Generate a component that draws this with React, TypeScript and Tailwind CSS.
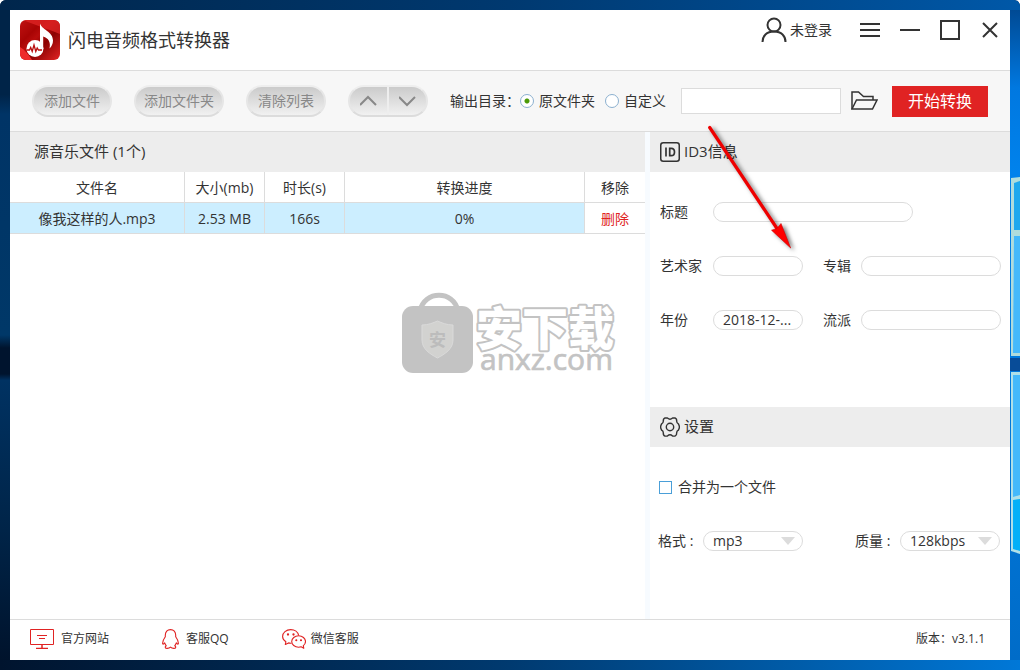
import React, { useState } from 'react';

interface AudioFile {
  id: number;
  name: string;
  size: string;
  duration: string;
  progress: number;
}

const INITIAL_FILES: AudioFile[] = [
  { id: 1, name: '像我这样的人.mp3', size: '2.53 MB', duration: '166s', progress: 0 },
];

/* ---------- Icons ---------- */

const AppLogo: React.FC = () => (
  <svg width="40" height="40" viewBox="0 0 40 40" aria-hidden="true">
    <defs>
      <linearGradient id="logoBg" x1="0" y1="0" x2="1" y2="1">
        <stop offset="0" stopColor="#c01212" />
        <stop offset="0.3" stopColor="#a80404" />
        <stop offset="0.42" stopColor="#b80c0c" />
        <stop offset="0.6" stopColor="#8c0202" />
        <stop offset="1" stopColor="#e22424" />
      </linearGradient>
    </defs>
    <rect width="40" height="40" rx="6" fill="url(#logoBg)" />
    <path d="M6 0h28a6 6 0 0 1 6 6v8C30 10 16 5 4 .5Z" fill="#e02626" opacity=".75" />
    <path d="M0 27c5 3 9 8 12 13H6a6 6 0 0 1-6-6Z" fill="#ee2c2c" />
    <circle cx="15" cy="28.500" r="8.500" fill="#fff" />
    <path d="M20 3.500c1.500 6 13 8 13 17 0 3.500-1.500 6-3.500 8 1.500-6-1-10.500-6.300-12v12.500H20Z" fill="#fff" />
    <path d="M7 30h2.500l1.200-2.500 1.500 4 1.800-6.500 1.800 6.500 1.400-3.500 1.300 2H22" fill="none" stroke="#b80c0c" strokeWidth="1.300" />
  </svg>
);

const UserIcon: React.FC = () => (
  <svg width="26" height="26" viewBox="0 0 26 26" fill="none" stroke="#333" strokeWidth="2" aria-hidden="true">
    <circle cx="13" cy="8" r="6.500" />
    <path d="M1.500 25c0-6 4-10.500 11.500-10.500S24.500 19 24.500 25" />
  </svg>
);

const FolderIcon: React.FC = () => (
  <svg width="27" height="20" viewBox="0 0 27 20" fill="none" stroke="#333" strokeWidth="1.500" aria-hidden="true">
    <path d="M1 18V1h6.500l5 4.500H22V9" />
    <path d="M1 18 5.500 9h20.500L21.500 18Z" />
  </svg>
);

const IdIcon: React.FC = () => (
  <svg width="20" height="20" viewBox="0 0 20 20" aria-hidden="true">
    <rect x=".75" y=".75" width="18.500" height="18.500" rx="2.500" fill="none" stroke="#333" strokeWidth="1.500" />
    <path d="M6 5.500v9M9.700 6.300v7.400h1.500c2.200 0 3.300-1.400 3.300-3.700s-1.100-3.700-3.300-3.700Z" fill="none" stroke="#333" strokeWidth="1.700" />
  </svg>
);

const GearIcon: React.FC = () => (
  <svg width="20" height="20" viewBox="0 0 20 20" fill="none" stroke="#333" strokeWidth="1.400" strokeLinejoin="round" aria-hidden="true">
    <circle cx="10" cy="10" r="3.700" />
    <path d="M7.400 1 5 .9C3.600 1.500 3.100 2.300 3.300 4.300 3.300 5.500 2.700 6.300 1.600 6.900L.7 9v2l.9 2.100c1.100.6 1.700 1.400 1.700 2.600-.2 2 .3 2.800 1.700 3.400l2.400-.1c1-.9 1.600-1.300 2.600-1.300s1.600.4 2.600 1.300l2.400.1c1.400-.6 1.900-1.400 1.700-3.400 0-1.200.6-2 1.700-2.600l.9-2.100V9l-.9-2.100c-1.100-.6-1.700-1.400-1.700-2.600.2-2-.3-2.800-1.700-3.400L12.600 1c-1 .9-1.600 1.300-2.600 1.300S8.400 1.900 7.400 1Z" />
  </svg>
);

const MonitorIcon: React.FC = () => (
  <svg width="24" height="20" viewBox="0 0 24 20" fill="none" stroke="#e02323" aria-hidden="true">
    <path d="M.5.5h23v15H.5ZM7 6.500h10M9 9.500h6" />
    <path d="M12 16v3M6 19.500h12" strokeWidth="1.500" />
  </svg>
);

const QQIcon: React.FC = () => (
  <svg width="17" height="20" viewBox="0 0 17 20" fill="none" stroke="#e02323" strokeWidth="1.100" strokeLinejoin="round" aria-hidden="true">
    <path d="M8.500.6C5.300.6 3.300 3 3.300 6.300v1.500C1.700 10 .6 12 .6 14.200c0 1.300.9 1.300 2.100-.3.300 1.200.9 2.100 1.600 2.900-1.500.6-1.600 2.600.9 2.600 1.500 0 2.500-.4 3.300-1.200.8.800 1.800 1.200 3.300 1.200 2.500 0 2.400-2 .9-2.600.7-.8 1.300-1.700 1.600-2.900 1.200 1.600 2.100 1.600 2.100.3 0-2.200-1.100-4.200-2.700-6.400V6.300C13.700 3 11.700.6 8.500.6Z" />
  </svg>
);

const WeChatIcon: React.FC = () => (
  <svg width="24" height="20" viewBox="0 0 24 20" fill="none" stroke="#e02323" strokeWidth="1.100" strokeLinejoin="round" aria-hidden="true">
    <path d="M9.500 14.200c-1.100.1-2 0-3-.3L3.300 15.500l.6-2.800C1.700 11.400.6 9.500.6 7.400.6 3.600 4.200.6 8.700.6c4 0 7.300 2.500 8 5.900" />
    <path d="M16.600 6.800c-3.800 0-6.900 2.500-6.900 5.700s3.100 5.700 6.900 5.700c.9 0 1.700-.1 2.500-.4l2.700 1.500-.5-2.700c1.400-1 2.200-2.500 2.200-4.100 0-3.200-3.100-5.700-6.900-5.700Z" />
    <circle cx="6" cy="5.500" r=".6" fill="#e02323" />
    <circle cx="11.500" cy="5.500" r=".6" fill="#e02323" />
    <circle cx="14.300" cy="11.300" r=".5" fill="#e02323" />
    <circle cx="19" cy="11.300" r=".5" fill="#e02323" />
  </svg>
);

/* ---------- Decorations ---------- */

const Watermark: React.FC = () => (
  <svg
    width="220"
    height="100"
    viewBox="0 -8 220 100"
    aria-hidden="true"
    className="pointer-events-none absolute top-1/2 left-1/2 -translate-x-1/2 -translate-y-1/2"
  >
    <path d="M20 18C24-3 54-3 58 18" fill="none" stroke="#c3c3c3" strokeWidth="5" />
    <rect x="2" y="13" width="71" height="67" rx="11" fill="#c3c3c3" />
    <path d="M22 32c6 0 11-2 15.500-4C42 30 47 32 53 32v15c0 9-8 14-15.500 18C30 61 22 56 22 47Z" fill="#d2d2d0" stroke="#dadada" />
    <text x="37.500" y="53" textAnchor="middle" fontSize="17" fontWeight="bold" fill="#bcbcbc" fontFamily="'Noto Sans CJK SC', sans-serif">
      安
    </text>
    <text
      x="76"
      y="52"
      fontSize="46"
      fontWeight="900"
      fill="#fff"
      stroke="#c3c3c3"
      strokeWidth="4"
      strokeLinejoin="round"
      paintOrder="stroke"
      fontFamily="'Noto Sans CJK SC', sans-serif"
    >
      安下载
    </text>
    <text x="80" y="77" fontSize="30" fill="#c3c3c3" stroke="#c3c3c3" strokeWidth=".7" fontFamily="'Open Sans', sans-serif">
      anxz.com
    </text>
  </svg>
);

const PointerArrow: React.FC = () => (
  <svg
    width="100"
    height="136"
    viewBox="0 0 100 136"
    aria-hidden="true"
    className="pointer-events-none absolute -top-2 left-[56px] drop-shadow-[3px_2px_2px_rgba(0,0,0,0.55)]"
  >
    <path d="M3.700 3.500 72 106" stroke="#e00" strokeWidth="3.200" strokeLinecap="round" />
    <path d="M75 99.500 84.700 124 65.500 106.200 71 104.500Z" fill="#f00" stroke="#c00" strokeWidth=".6" />
  </svg>
);

const WallpaperEdge: React.FC = () => (
  <svg className="h-auto w-[10px] shrink-0" viewBox="0 10 10 650" preserveAspectRatio="none" aria-hidden="true">
    <defs>
      <linearGradient id="edge" x1="0" y1="0" x2="0" y2="1">
        <stop offset="0" stopColor="#004a94" />
        <stop offset=".12" stopColor="#0078e0" />
        <stop offset=".25" stopColor="#0082ec" />
        <stop offset="1" stopColor="#006cc8" />
      </linearGradient>
    </defs>
    <rect y="10" width="10" height="650" fill="url(#edge)" />
    <path d="M1 178 10 177V356H1Z" fill="#b0dcdc" />
    <path d="M4 183 10 181V230H4Z" fill="#1ea8ee" />
    <path d="M4 236H10V353H3Z" fill="#45b9fb" />
    <path d="M0 358H10V371H0Z" fill="#084c98" />
    <path d="M1 372H10V554L1 551Z" fill="#b0e0e8" />
    <path d="M3 375H10V495L3 497Z" fill="#45b9fb" />
    <path d="M3 500 10 499V551L3 549Z" fill="#04b0f8" />
  </svg>
);

/* ---------- Form parts ---------- */

const PILL_BUTTON =
  'h-8 rounded-full border-2 border-t-[#eee] border-x-[#e6e6e6] border-b-[#dcdcdc] bg-linear-to-b from-[#cbcbcb] to-[#f1f1f1] text-sm text-[#888]';

interface FieldProps {
  id: string;
  label: string;
  labelClass: string;
  inputClass: string;
  value: string;
  onChange: (value: string) => void;
}

const Field: React.FC<FieldProps> = ({ id, label, labelClass, inputClass, value, onChange }) => (
  <>
    <label htmlFor={id} className={`shrink-0 ${labelClass}`}>{label}</label>
    <input
      id={id}
      type="text"
      value={value}
      onChange={(e) => onChange(e.target.value)}
      className={`h-5 rounded-full border border-[#dcdcdc] bg-white px-[9px] outline-none ${inputClass}`}
    />
  </>
);

interface PillSelectProps {
  id: string;
  label: string;
  options: string[];
}

const PillSelect: React.FC<PillSelectProps> = ({ id, label, options }) => (
  <div className="flex items-center">
    <label htmlFor={id} className="w-[45px]">{label}</label>
    <div className="relative">
      <select
        id={id}
        className="block h-5 w-[100px] appearance-none rounded-full border border-[#dcdcdc] bg-white pl-[9px] leading-[18px] outline-none"
      >
        {options.map((option) => (
          <option key={option}>{option}</option>
        ))}
      </select>
      <svg width="14" height="8" viewBox="0 0 14 8" className="pointer-events-none absolute top-1.5 right-2" aria-hidden="true">
        <path d="M0 0h14L7 8Z" fill="#dcdcdc" />
      </svg>
    </div>
  </div>
);

interface DirRadioProps {
  label: string;
  checked: boolean;
  onSelect: () => void;
}

const DirRadio: React.FC<DirRadioProps> = ({ label, checked, onSelect }) => (
  <label className="flex items-center gap-[5px] whitespace-nowrap">
    <input
      type="radio"
      name="outputDir"
      checked={checked}
      onChange={onSelect}
      className="size-[14px] appearance-none rounded-full border border-[#8bb0cf] bg-white checked:bg-[radial-gradient(circle,#4c9a06_0,#4c9a06_2px,#fff_3px)]"
    />
    {label}
  </label>
);

/* ---------- App ---------- */

const App: React.FC = () => {
  const [files, setFiles] = useState<AudioFile[]>(INITIAL_FILES);
  const [outputMode, setOutputMode] = useState<'source' | 'custom'>('source');
  const [outputDir, setOutputDir] = useState('');
  const [merge, setMerge] = useState(false);
  const [tags, setTags] = useState({ title: '', artist: '', album: '', year: '2018-12-...', genre: '' });

  const setTag = (key: keyof typeof tags) => (value: string) => {
    setTags((prev) => ({ ...prev, [key]: value }));
  };

  const removeFile = (id: number) => {
    setFiles((prev) => prev.filter((f) => f.id !== id));
  };

  return (
    <div className="flex min-h-screen flex-col overflow-hidden rounded-t-md bg-[#00234a] font-['Open_Sans','Noto_Sans_CJK_SC',sans-serif] text-sm text-[#333]">
      <div className="h-[10px] shrink-0 bg-linear-to-r from-[#00264c] via-[#003970] to-[#0058a8]" />

      <div className="flex flex-1">
        <div className="w-[10px] shrink-0 bg-[linear-gradient(to_bottom,#002448,#002448_13%,#003466_16%,#003868_50%,#00142e_52%,#00142e_56%,#003262_57%,#002448_80%,#00132c)]" />

        <div className="relative flex min-w-0 flex-1 flex-col bg-white">
          {/* Title bar */}
          <header className="flex h-[61px] items-start justify-between border-b border-[#dcdcdc] pl-[10px]">
            <div className="flex items-center gap-2 pt-[10px]">
              <AppLogo />
              <h1 className="text-lg">闪电音频格式转换器</h1>
            </div>
            <div className="flex h-10 items-center gap-5 pr-[10px]">
              <button className="mr-2 flex items-center gap-[3px]">
                <UserIcon />
                未登录
              </button>
              <button aria-label="菜单">
                <svg width="20" height="20" viewBox="0 0 20 20" stroke="#333" strokeWidth="2">
                  <path d="M0 4h20M0 10h20M0 16h20" />
                </svg>
              </button>
              <button aria-label="最小化">
                <svg width="20" height="20" viewBox="0 0 20 20" stroke="#333" strokeWidth="2">
                  <path d="M0 10h20" />
                </svg>
              </button>
              <button aria-label="最大化">
                <svg width="20" height="20" viewBox="0 0 20 20" fill="none" stroke="#333" strokeWidth="2">
                  <path d="M1 1h18v18H1Z" />
                </svg>
              </button>
              <button aria-label="关闭">
                <svg width="20" height="20" viewBox="0 0 20 20" stroke="#333" strokeWidth="2">
                  <path d="m3 3 14 14M17 3 3 17" />
                </svg>
              </button>
            </div>
          </header>

          {/* Toolbar */}
          <div className="flex h-[61px] items-center border-b border-[#dcdcdc] bg-[#f7f7f7] px-[22px]">
            <div className="flex shrink-0 gap-[22px]">
              <button className={`w-20 ${PILL_BUTTON}`}>添加文件</button>
              <button className={`w-[90px] ${PILL_BUTTON}`}>添加文件夹</button>
              <button className={`w-20 ${PILL_BUTTON}`} onClick={() => setFiles([])}>清除列表</button>
              <div className={`flex w-20 divide-x-2 divide-[#eee] ${PILL_BUTTON}`}>
                <button aria-label="上移" className="flex flex-1 items-center justify-center">
                  <svg width="18" height="12" viewBox="0 0 18 12" fill="none" stroke="#888" strokeWidth="2">
                    <path d="m0 10 8-8 8 8" />
                  </svg>
                </button>
                <button aria-label="下移" className="flex flex-1 items-center justify-center">
                  <svg width="18" height="12" viewBox="0 0 18 12" fill="none" stroke="#888" strokeWidth="2">
                    <path d="m0 2 8 8 8-8" />
                  </svg>
                </button>
              </div>
            </div>

            <div className="ml-[22px] flex flex-1 items-center">
              <span className="whitespace-nowrap">输出目录：</span>
              <div className="flex items-center gap-[10px]">
                <DirRadio label="原文件夹" checked={outputMode === 'source'} onSelect={() => setOutputMode('source')} />
                <DirRadio label="自定义" checked={outputMode === 'custom'} onSelect={() => setOutputMode('custom')} />
              </div>
              <input
                type="text"
                aria-label="输出目录"
                value={outputDir}
                onChange={(e) => setOutputDir(e.target.value)}
                className="ml-[15px] h-[26px] w-0 min-w-0 flex-1 border border-[#dcdcdc] bg-white px-2 outline-none"
              />
              <button aria-label="浏览" className="ml-[10px]">
                <FolderIcon />
              </button>
              <button className="ml-[14px] h-[31px] w-24 bg-[#e02323] text-base text-white">开始转换</button>
            </div>
          </div>

          <div className="flex flex-1">
            {/* File list */}
            <main className="min-w-0 flex-1">
              <h2 className="flex h-10 items-center bg-[#ededed] pl-6 text-[15px]">源音乐文件 ({files.length}个)</h2>
              <table className="w-full table-fixed border-separate border-spacing-0 text-center">
                <thead>
                  <tr className="h-[31px] *:border-b *:border-[#dcdcdc] *:p-0 *:pt-0.5 *:font-normal">
                    <th className="border-r">文件名</th>
                    <th className="w-20 border-r">大小(mb)</th>
                    <th className="w-20 border-r">时长(s)</th>
                    <th className="w-60 border-r">转换进度</th>
                    <th className="w-[60px]">移除</th>
                  </tr>
                </thead>
                <tbody>
                  {files.map((file) => (
                    <tr key={file.id} className="h-[31px] *:border-b *:border-[#dcdcdc] *:p-0 *:pt-0.5">
                      <td className="border-r bg-[#cceeff]">{file.name}</td>
                      <td className="border-r bg-[#cceeff]">{file.size}</td>
                      <td className="border-r bg-[#cceeff]">{file.duration}</td>
                      <td className="border-r bg-[#cceeff]">{file.progress}%</td>
                      <td>
                        <button className="text-[#e02323]" onClick={() => removeFile(file.id)}>删除</button>
                      </td>
                    </tr>
                  ))}
                </tbody>
              </table>
            </main>

            {/* Side panel */}
            <aside className="relative w-[365px] shrink-0 border-l-5 border-[#f7fbff]">
              <h2 className="flex h-10 items-center gap-1 bg-[#ededed] pl-[10px] text-[15px]">
                <IdIcon />
                ID3信息
              </h2>
              <div className="flex h-[235px] flex-col gap-[34px] pt-[30px] pr-[9px] pl-[10px]">
                <div className="flex h-5 items-center">
                  <Field id="title" label="标题" labelClass="w-[53px]" inputClass="w-[200px]" value={tags.title} onChange={setTag('title')} />
                </div>
                <div className="flex h-5 items-center">
                  <Field id="artist" label="艺术家" labelClass="w-[53px]" inputClass="w-[90px]" value={tags.artist} onChange={setTag('artist')} />
                  <Field id="album" label="专辑" labelClass="ml-5 w-[38px]" inputClass="min-w-0 flex-1" value={tags.album} onChange={setTag('album')} />
                </div>
                <div className="flex h-5 items-center">
                  <Field id="year" label="年份" labelClass="w-[53px]" inputClass="w-[90px]" value={tags.year} onChange={setTag('year')} />
                  <Field id="genre" label="流派" labelClass="ml-5 w-[38px]" inputClass="min-w-0 flex-1" value={tags.genre} onChange={setTag('genre')} />
                </div>
              </div>

              <h2 className="flex h-10 items-center gap-1 bg-[#ededed] pl-[10px] text-[15px]">
                <GearIcon />
                设置
              </h2>
              <div className="flex flex-col gap-[34px] pt-[30px] pr-[10px] pl-2">
                <label className="flex h-5 items-center gap-[6px] pl-px">
                  <input
                    type="checkbox"
                    checked={merge}
                    onChange={(e) => setMerge(e.target.checked)}
                    className="size-[13px] appearance-none border border-[#4a9fd8] bg-white checked:bg-[#4a9fd8]"
                  />
                  合并为一个文件
                </label>
                <div className="flex h-5 items-center justify-between">
                  <PillSelect id="format" label="格式 :" options={['mp3', 'wav', 'flac', 'm4a']} />
                  <PillSelect id="quality" label="质量 :" options={['128kbps', '192kbps', '320kbps']} />
                </div>
              </div>

              <PointerArrow />
            </aside>
          </div>

          {/* Footer */}
          <footer className="flex h-[41px] items-center justify-between border-t border-[#dcdcdc] pr-[25px] pb-0.5 pl-5 text-xs">
            <nav className="flex items-center gap-[53px]">
              <a href="#site" className="flex items-center gap-[7px]">
                <MonitorIcon />
                官方网站
              </a>
              <a href="#qq" className="flex items-center gap-[7px]">
                <QQIcon />
                客服QQ
              </a>
              <a href="#wechat" className="flex items-center gap-[5px]">
                <WeChatIcon />
                微信客服
              </a>
            </nav>
            <span>版本：v3.1.1</span>
          </footer>

          <Watermark />
        </div>

        <WallpaperEdge />
      </div>

      <div className="h-[10px] shrink-0 bg-linear-to-r from-[#00142e] via-[#003a70] to-[#0078d8]" />
    </div>
  );
};

export default App;
